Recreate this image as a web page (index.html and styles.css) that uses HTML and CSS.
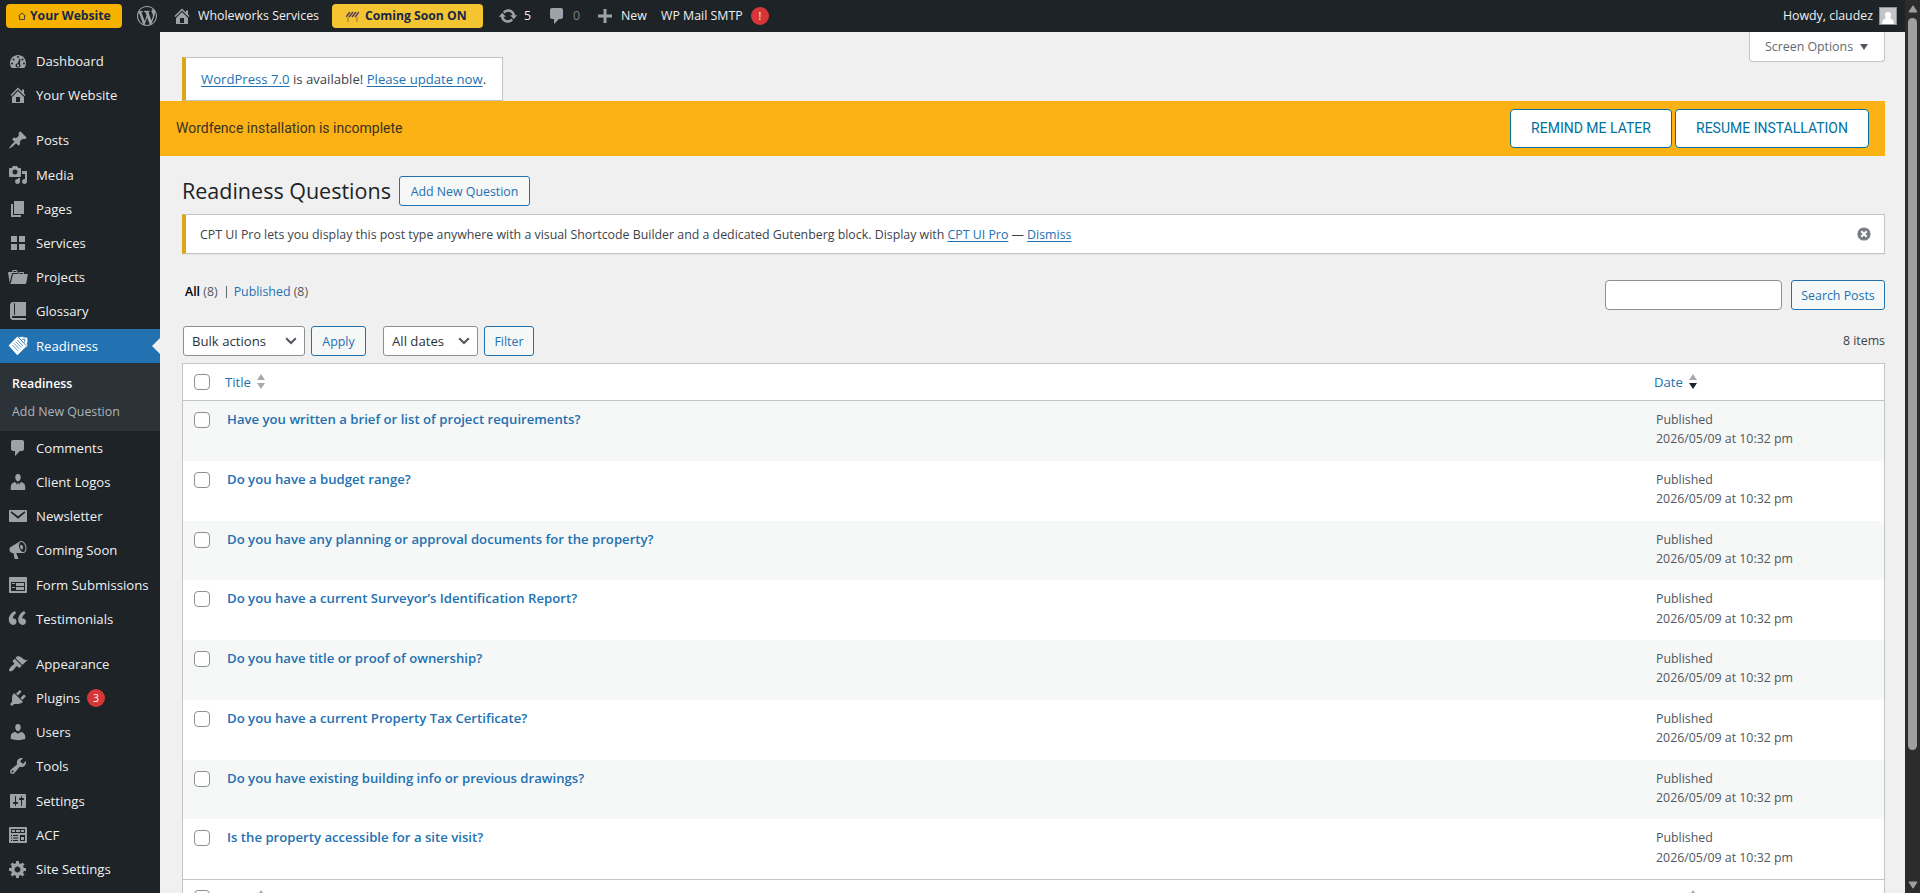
FILE: index.html
```html
<!DOCTYPE html>
<html lang="en">
<head>
    <meta charset="UTF-8">
    <meta name="viewport" content="width=device-width, initial-scale=1.0">
    <title>Readiness Questions</title>
    <link rel="stylesheet" href="styles.css">
</head>
<body>

    <!-- Icon sprite -->
    <svg class="sprite" aria-hidden="true">
        <symbol id="i-wordpress" viewBox="0 0 20 20"><path d="M20 10c0-5.51-4.49-10-10-10C4.48 0 0 4.49 0 10c0 5.52 4.48 10 10 10 5.51 0 10-4.48 10-10zM7.78 15.37L4.37 6.22c.55-.02 1.17-.08 1.17-.08.5-.06.44-1.13-.06-1.11 0 0-1.45.11-2.37.11-.18 0-.37 0-.58-.01C4.12 2.69 6.87 1.11 10 1.11c2.33 0 4.45.87 6.05 2.34-.68-.11-1.65.39-1.65 1.58 0 .74.45 1.36.9 2.1.35.61.55 1.36.55 2.46 0 1.49-1.4 5-1.4 5l-3.03-8.37c.54-.02.82-.17.82-.17.5-.05.44-1.25-.06-1.22 0 0-1.44.12-2.38.12-.87 0-2.33-.12-2.33-.12-.5-.03-.56 1.2-.06 1.22l.92.08 1.26 3.41zM17.41 10c.24-.64.74-1.87.43-4.25.7 1.29 1.05 2.71 1.05 4.25 0 3.29-1.73 6.24-4.4 7.78.97-2.59 1.94-5.2 2.92-7.78zM6.1 18.09C3.12 16.65 1.11 13.53 1.11 10c0-1.3.23-2.48.72-3.59C3.25 10.3 4.67 14.2 6.1 18.09zm4.03-6.63l2.58 6.98c-.86.29-1.76.45-2.71.45-.79 0-1.57-.11-2.29-.33.81-2.38 1.62-4.74 2.42-7.1z"/></symbol>
        <symbol id="i-dashboard" viewBox="0 0 20 20"><path fill-rule="evenodd" d="M3.76 17h12.48C17.34 15.63 18 13.9 18 12c0-4.41-3.58-8-8-8s-8 3.59-8 8c0 1.9.66 3.63 1.76 5zM9 6a1 1 0 1 1 2 0 1 1 0 0 1-2 0zM4.500 8.500a1 1 0 1 1 2 0 1 1 0 0 1-2 0zM13.500 8.500a1 1 0 1 1 2 0 1 1 0 0 1-2 0zM3 12.500a1 1 0 1 1 2 0 1 1 0 0 1-2 0zM15 12.500a1 1 0 1 1 2 0 1 1 0 0 1-2 0zM11.600 7.400l.9.300-.6 5.300c.4.400.6.900.6 1.400 0 1.200-1.100 2.100-2.500 2.100s-2.500-.9-2.500-2.100 1.100-2.200 2.300-2.200zM10 13.200a1.200 1.200 0 1 0 0 2.400 1.200 1.200 0 0 0 0-2.400z"/></symbol>
        <symbol id="i-home" viewBox="0 0 20 20"><path d="M16 8.500l1.530 1.530-1.060 1.060L10 4.600l-6.470 6.490-1.060-1.060L10 2.500l4 4v-2h2v4zm-6-2.460l6 5.990V18H4v-5.970zM12 17v-5H8v5h4z"/></symbol>
        <symbol id="i-pin" viewBox="0 0 20 20"><path d="M10.440 3.020l1.820-1.820 6.360 6.350-1.830 1.820c-1.050-.68-2.480-.57-3.410.36l-.75.75c-.92.93-1.040 2.350-.35 3.410l-1.830 1.820-2.410-2.410-2.800 2.790c-.42.42-3.380 2.710-3.800 2.290s1.860-3.390 2.280-3.810l2.790-2.790L4.100 9.360l1.830-1.820c1.050.69 2.480.57 3.400-.36l.75-.75c.93-.92 1.050-2.350.36-3.410z"/></symbol>
        <symbol id="i-media" viewBox="0 0 20 20"><path d="M13 11V4c0-.55-.45-1-1-1h-1.670L9 1H5L3.670 3H2c-.55 0-1 .45-1 1v7c0 .55.45 1 1 1h10c.55 0 1-.45 1-1zM7 4.500c1.380 0 2.500 1.120 2.500 2.500S8.380 9.500 7 9.500 4.500 8.380 4.500 7 5.620 4.500 7 4.500zM14 6h5v10.500c0 1.380-1.120 2.500-2.500 2.500S14 17.880 14 16.500s1.120-2.500 2.500-2.500c.17 0 .34.02.5.05V9h-3V6zm-4 8.050V13h2v3.500c0 1.380-1.120 2.500-2.500 2.500S7 17.880 7 16.500 8.120 14 9.500 14c.17 0 .34.02.5.05z"/></symbol>
        <symbol id="i-page" viewBox="0 0 20 20"><path d="M6 15V2h10v13H6zm-1 1h8v2H3V5h2v11z"/></symbol>
        <symbol id="i-grid" viewBox="0 0 20 20"><path d="M3 3h6v6H3zM11 3h6v6h-6zM3 11h6v6H3zM11 11h6v6h-6z"/></symbol>
        <symbol id="i-portfolio" viewBox="0 0 20 20"><path d="M4 5H.78c-.37 0-.74.32-.69.84l1.560 9.990S3.500 8.470 3.860 6.700c.11-.53.61-.7.98-.7H10s-.7-2.080-.77-2.310C9.110 3.250 8.890 3 8.450 3H5.140c-.36 0-.7.23-.8.64C4.250 4.040 4 5 4 5zm4.880 0h-4s.42-1 .87-1h2.130c.48 0 1 1 1 1zM2.670 16.250c-.31.47-.76.75-1.260.75h15.730c.54 0 .92-.31 1.030-.83.44-2.190 1.680-8.440 1.680-8.440.07-.5-.3-.73-.62-.73H16V5.530c0-.16-.26-.53-.66-.53h-3.760c-.52 0-.87.58-.87.58L10 7H5.590c-.32 0-.63.19-.69.5 0 0-1.590 6.700-1.720 7.330-.07.37-.22.99-.51 1.420zM15.380 7H11s.58-1 1.130-1h2.290c.71 0 .96 1 .96 1z"/></symbol>
        <symbol id="i-book" viewBox="0 0 20 20"><path d="M5 17h13v2H5c-1.660 0-3-1.340-3-3V4c0-1.660 1.340-3 3-3h13v14H5c-.55 0-1 .45-1 1s.45 1 1 1zm2-3.500v-11c0-.28-.22-.5-.5-.5s-.5.22-.5.5v11c0 .28.22.5.5.5s.5-.22.5-.5z"/></symbol>
        <symbol id="i-readiness" viewBox="0 0 20 20">
            <path d="M10.500.8l1.800.4 1.700-.7 1.500.8 3.800.5.300 3.600-.8 1.800.8 2.300-1.500 1.700z"/>
            <path d="M9.500.6L.6 9.600l8.700 9.600 9-8.800z"/>
            <path d="M10.800 1.800l8.200 8.400M13.800 3.400l3-.4-.1 3.400" fill="none" stroke="#2271b1" stroke-width=".8"/>
            <path d="M9.300 4l5.800 6M7.600 5.600l5.900 6.100M5.900 7.200l6 6.200M4.200 8.900l6 6.200" stroke="#2271b1" stroke-width=".7"/>
        </symbol>
        <symbol id="i-comment" viewBox="0 0 20 20"><path d="M5 2h9c1.100 0 2 .9 2 2v7c0 1.100-.9 2-2 2h-2l-5 5v-5H5c-1.100 0-2-.9-2-2V4c0-1.100.9-2 2-2z"/></symbol>
        <symbol id="i-client" viewBox="0 0 20 20"><path d="M7.300 6l-.030-.190C7.040 4.030 7.840 2 10 2s2.960 2.030 2.730 3.810L12.700 6c-.18 1.500-1.300 3.400-2.700 3.400S7.480 7.500 7.300 6zM2.800 18v-3.500c0-2.300 2-4.300 4.400-4.500L9 12.800l.6-1.300-.4-.8h1.600l-.4.8.6 1.300 1.800-2.800c2.400.2 4.400 2.200 4.400 4.500V18z"/></symbol>
        <symbol id="i-email" viewBox="0 0 20 20"><path fill-rule="evenodd" d="M2 4h16c.55 0 1 .45 1 1v10c0 .55-.45 1-1 1H2c-.55 0-1-.45-1-1V5c0-.55.45-1 1-1zM3.500 5.300L2.600 6.500 10 12.700l7.400-6.200-.9-1.200L10 10.200z"/></symbol>
        <symbol id="i-megaphone" viewBox="0 0 20 20"><path d="M18.150 5.940c.46 1.620.38 3.220-.02 4.480-.42 1.280-1.260 2.180-2.300 2.480-.16.06-.26.06-.4.06-.06.02-.12.02-.18.02-.06.02-.14.02-.22.02h-6.800l2.220 5.500c.02.14-.06.26-.14.34-.08.1-.24.16-.34.16H6.950c-.1 0-.26-.06-.34-.16-.08-.08-.16-.2-.14-.34l-1-5.500H4.250l-.02-.02c-.5.06-1.080-.18-1.540-.62s-.88-1.080-1.060-1.880c-.24-.8-.2-1.560-.02-2.200.18-.62.58-1.080 1.060-1.300l.02-.02 9-5.400c.1-.06.18-.1.24-.16.06-.04.14-.08.24-.12.16-.08.28-.12.5-.18 1.040-.3 2.240.1 3.220.98s1.840 2.240 2.260 3.860zm-2.580 5.980h-.02c.4-.1.74-.34 1.040-.7.58-.7.86-1.760.86-3.040 0-.64-.1-1.300-.28-1.980-.34-1.360-1.020-2.500-1.780-3.240s-1.680-1.100-2.460-.88c-.82.22-1.400.96-1.700 2-.32 1.040-.28 2.360.06 3.720.38 1.360 1 2.500 1.800 3.240.78.74 1.620 1.100 2.480.88zm-2.540-7.080c.22-.04.42-.02.62.04.38.16.76.48 1.020 1s.42 1.200.42 1.780c0 .3-.04.56-.12.8-.18.48-.44.84-.86.94-.34.1-.8-.06-1.140-.4s-.64-.86-.78-1.500c-.18-.62-.12-1.240.02-1.720s.48-.84.82-.94z"/></symbol>
        <symbol id="i-form" viewBox="0 0 20 20"><path d="M2 2h16c.55 0 1 .45 1 1v14c0 .55-.45 1-1 1H2c-.55 0-1-.45-1-1V3c0-.55.45-1 1-1zm15 14V7H3v9h14zM4 8v1h3V8H4zm4 0v3h8V8H8zm-4 4v1h3v-1H4zm4 0v3h8v-3H8z"/></symbol>
        <symbol id="i-quote" viewBox="0 0 20 20"><path d="M8.540 12.740c0-.87-.24-1.610-.72-2.220-.73-.92-2.140-1.030-2.960-.85-.34-1.930 1.300-4.390 3.420-5.450L6.650 1.940C3.450 3.460.31 6.960.85 11.370 1.190 14.160 2.800 16 5.080 16c1 0 1.830-.29 2.480-.88.66-.59.98-1.380.98-2.380zm9.430 0c0-.87-.24-1.610-.72-2.220-.73-.92-2.140-1.030-2.960-.85-.34-1.930 1.300-4.390 3.420-5.450l-1.630-2.280c-3.200 1.520-6.340 5.020-5.800 9.430.34 2.790 1.950 4.630 4.230 4.630 1 0 1.830-.29 2.480-.88.66-.59.98-1.380.98-2.380z"/></symbol>
        <symbol id="i-brush" viewBox="0 0 20 20"><path d="M14.480 11.060L7.410 3.990l1.500-1.500c.5-.56 2.300-.47 3.510.32 1.210.8 1.430 1.280 2.910 2.100 1.180.64 2.450 1.260 4.450.85zm-.71.71L6.700 4.700 4.930 6.470c-.39.39-.39 1.020 0 1.410l1.060 1.060c.39.39.39 1.030 0 1.420-.6.6-1.430 1.110-2.210 1.690-.35.26-.7.53-1.010.84C1.430 14.230.4 16.080 1.400 17.070c.99 1 2.840-.03 4.180-1.360.31-.31.58-.66.85-1.020.57-.78 1.080-1.610 1.690-2.210.39-.39 1.020-.39 1.410 0l1.060 1.060c.39.39 1.020.39 1.410 0z"/></symbol>
        <symbol id="i-plug" viewBox="0 0 20 20"><path d="M13.110 4.360L9.870 7.600 8 5.730l3.240-3.240c.35-.34 1.050-.2 1.560.32.52.51.66 1.210.31 1.550zm-8 1.770l.91-1.120 9.010 9.010-1.190.84c-.71.71-2.630 1.160-3.820 1.160H6.140L4.900 17.260c-.59.59-1.540.59-2.120 0-.59-.58-.59-1.530 0-2.120l1.240-1.240v-3.880c0-1.130.4-3.190 1.090-3.890zm7.260 3.970l3.240-3.240c.34-.35 1.040-.21 1.550.31.52.51.66 1.210.31 1.550l-3.240 3.250z"/></symbol>
        <symbol id="i-user" viewBox="0 0 20 20"><path d="M10 9.250c-2.270 0-2.730-3.440-2.730-3.440C7 4.020 7.820 2 9.970 2c2.160 0 2.980 2.020 2.710 3.810 0 0-.41 3.440-2.680 3.440zm0 2.570L12.720 10c2.390 0 4.520 2.330 4.520 4.530v2.490s-3.650 1.130-7.240 1.130c-3.650 0-7.240-1.130-7.240-1.130v-2.490c0-2.250 1.940-4.480 4.470-4.480z"/></symbol>
        <symbol id="i-wrench" viewBox="0 0 20 20"><path d="M16.680 9.770c-1.340 1.340-3.300 1.670-4.950.99l-5.410 6.520c-.99.99-2.590.99-3.580 0s-.99-2.590 0-3.570l6.520-5.420c-.68-1.650-.35-3.610.99-4.950 1.280-1.280 3.120-1.620 4.720-1.060l-2.890 2.890 2.820 2.820 2.860-2.870c.53 1.580.18 3.390-1.080 4.650zM3.810 16.210c.4.39 1.040.39 1.430 0 .4-.4.4-1.040 0-1.430-.39-.4-1.030-.4-1.430 0-.39.39-.39 1.030 0 1.430z"/></symbol>
        <symbol id="i-sliders" viewBox="0 0 20 20"><path d="M18 16V4c0-.55-.45-1-1-1H3c-.55 0-1 .45-1 1v12c0 .55.45 1 1 1h14c.55 0 1-.45 1-1zM8 11h1c.55 0 1 .45 1 1s-.45 1-1 1H8v1.500c0 .28-.22.5-.5.5s-.5-.22-.5-.5V13H6c-.55 0-1-.45-1-1s.45-1 1-1h1V5.500c0-.28.22-.5.5-.5s.5.22.5.5V11zm5-2h-1c-.55 0-1-.45-1-1s.45-1 1-1h1V5.500c0-.28.22-.5.5-.5s.5.22.5.5V7h1c.55 0 1 .45 1 1s-.45 1-1 1h-1v5.500c0 .28-.22.5-.5.5s-.5-.22-.5-.5V9z"/></symbol>
        <symbol id="i-acf" viewBox="0 0 20 20"><path fill-rule="evenodd" d="M2 2h16c.55 0 1 .45 1 1v14c0 .55-.45 1-1 1H2c-.55 0-1-.45-1-1V3c0-.55.45-1 1-1zM3 4v4h14V4zM4 5v2h3V5zM8 5v2h4V5zM13 5v2h3V5zM3 10v1h1v-1zM5 10v1h5v-1zM3 12.500v1h1v-1zM5 12.500v1h5v-1zM3 15v1h1v-1zM5 15v1h5v-1zM12 10v6h5v-6zM13 12h3v3h-3z"/></symbol>
        <symbol id="i-gear" viewBox="0 0 20 20"><path d="M18 12h-2.180c-.17.7-.44 1.350-.81 1.930l1.540 1.540-2.100 2.100-1.540-1.540c-.58.36-1.230.63-1.910.79V19H8v-2.180c-.68-.16-1.330-.43-1.910-.79l-1.540 1.540-2.120-2.120 1.540-1.540c-.36-.58-.63-1.230-.79-1.910H1V9.030h2.170c.16-.7.44-1.350.8-1.940L2.430 5.550l2.100-2.100 1.540 1.540c.58-.37 1.240-.64 1.930-.81V2h3v2.180c.68.16 1.330.43 1.910.79l1.540-1.540 2.120 2.120-1.540 1.540c.36.59.64 1.240.8 1.940H18V12zm-8.500 1.500c1.660 0 3-1.340 3-3s-1.340-3-3-3-3 1.340-3 3 1.340 3 3 3z"/></symbol>
        <symbol id="i-update" viewBox="0 0 20 20"><path d="M10.200 3.280c3.530 0 6.430 2.610 6.920 6h2.080l-3.500 4-3.500-4h2.320c-.45-1.970-2.210-3.450-4.320-3.450-1.450 0-2.730.71-3.540 1.780L4.950 5.660C6.230 4.200 8.110 3.280 10.200 3.280zm-.4 13.440c-3.520 0-6.430-2.610-6.920-6H.8l3.500-4c1.170 1.330 2.330 2.670 3.500 4H5.480c.45 1.970 2.210 3.450 4.320 3.450 1.450 0 2.730-.71 3.540-1.780l1.710 1.950c-1.280 1.460-3.150 2.380-5.250 2.380z"/></symbol>
        <symbol id="i-plus" viewBox="0 0 20 20"><path d="M8.500 3h3v5.500H17v3h-5.500V17h-3v-5.500H3v-3h5.500z"/></symbol>
        <symbol id="i-sort" viewBox="0 0 8 15"><path d="M4 0l4 6H0z"/><path class="down" d="M0 9h8l-4 6z"/></symbol>
        <symbol id="i-chevron" viewBox="0 0 12 8"><path d="M1.200 1.200L6 6l4.800-4.800" fill="none" stroke="#50575e" stroke-width="2"/></symbol>
    </svg>

    <header class="adminbar">
        <a class="pill pill-site"><svg class="house" viewBox="0 0 8 8"><path d="M.5 4L4 1l3.500 3M1.500 3.500v4h5v-4" fill="none" stroke="#14284a" stroke-width=".8"/></svg>Your Website</a>
        <svg class="icon bar-wp"><use href="#i-wordpress"/></svg>
        <svg class="icon bar-home"><use href="#i-home"/></svg>
        <span class="bar-name">Wholeworks Services</span>
        <a class="pill pill-soon"><svg class="barrier" viewBox="0 0 13 11"><path d="M2 5v6M11 5v6" stroke="#a9803a" stroke-width="1.200"/><path d="M0 1h13v5H0z" fill="#e3b95e"/><path d="M0 6l4-5M3 6l4-5M6 6l4-5M9 6l4-5" stroke="#5a3b40" stroke-width="1.300"/></svg>Coming Soon ON</a>
        <svg class="icon bar-update"><use href="#i-update"/></svg>
        <span class="bar-count">5</span>
        <svg class="icon bar-comment"><use href="#i-comment"/></svg>
        <span class="bar-zero">0</span>
        <svg class="icon bar-plus"><use href="#i-plus"/></svg>
        <span class="bar-new">New</span>
        <span class="bar-smtp">WP Mail SMTP</span>
        <span class="badge bar-alert">!</span>
        <span class="bar-howdy">Howdy, claudez</span>
        <svg class="avatar" viewBox="0 0 18 18"><path d="M0 0h18v18H0z" fill="#8c8f94"/><path d="M1 1h16v16H1z" fill="#c3c4c7"/><path d="M9 5c1.900 0 3 1.300 3 3.100 0 1.100-.4 2.200-1.100 2.900 2.400.5 3.900 2.700 4 6H3.100c.1-3.300 1.600-5.500 4-6C6.400 10.300 6 9.200 6 8.100 6 6.300 7.100 5 9 5z" fill="#fff"/></svg>
    </header>

    <div class="layout">
        <nav class="menu">
            <a class="item"><svg class="icon"><use href="#i-dashboard"/></svg>Dashboard</a>
            <a class="item"><svg class="icon"><use href="#i-home"/></svg>Your Website</a>
            <div class="separator"></div>
            <a class="item"><svg class="icon"><use href="#i-pin"/></svg>Posts</a>
            <a class="item"><svg class="icon"><use href="#i-media"/></svg>Media</a>
            <a class="item"><svg class="icon"><use href="#i-page"/></svg>Pages</a>
            <a class="item"><svg class="icon"><use href="#i-grid"/></svg>Services</a>
            <a class="item"><svg class="icon"><use href="#i-portfolio"/></svg>Projects</a>
            <a class="item"><svg class="icon"><use href="#i-book"/></svg>Glossary</a>
            <a class="item current"><svg class="icon"><use href="#i-readiness"/></svg>Readiness</a>
            <div class="submenu">
                <a class="active">Readiness</a>
                <a>Add New Question</a>
            </div>
            <a class="item"><svg class="icon"><use href="#i-comment"/></svg>Comments</a>
            <a class="item"><svg class="icon"><use href="#i-client"/></svg>Client Logos</a>
            <a class="item"><svg class="icon"><use href="#i-email"/></svg>Newsletter</a>
            <a class="item"><svg class="icon"><use href="#i-megaphone"/></svg>Coming Soon</a>
            <a class="item"><svg class="icon"><use href="#i-form"/></svg>Form Submissions</a>
            <a class="item"><svg class="icon"><use href="#i-quote"/></svg>Testimonials</a>
            <div class="separator"></div>
            <a class="item"><svg class="icon"><use href="#i-brush"/></svg>Appearance</a>
            <a class="item"><svg class="icon"><use href="#i-plug"/></svg>Plugins <span class="badge">3</span></a>
            <a class="item"><svg class="icon"><use href="#i-user"/></svg>Users</a>
            <a class="item"><svg class="icon"><use href="#i-wrench"/></svg>Tools</a>
            <a class="item"><svg class="icon"><use href="#i-sliders"/></svg>Settings</a>
            <a class="item"><svg class="icon"><use href="#i-acf"/></svg>ACF</a>
            <a class="item"><svg class="icon"><use href="#i-gear"/></svg>Site Settings</a>
        </nav>

        <main class="content">
            <a class="screen-options">Screen Options <span class="arrow"></span></a>

            <div class="notice update-nag"><p><a>WordPress 7.0</a> is available! <a>Please update now</a>.</p></div>

            <div class="wordfence">
                <span class="wordfence-text">Wordfence installation is incomplete</span>
                <div class="wordfence-actions">
                    <a class="wf-btn wf-remind">Remind me later</a>
                    <a class="wf-btn wf-resume">Resume installation</a>
                </div>
            </div>

            <div class="heading">
                <h1>Readiness Questions</h1>
                <a class="button add-new">Add New Question</a>
            </div>

            <div class="notice cpt-notice">
                <p>CPT UI Pro lets you display this post type anywhere with a visual Shortcode Builder and a dedicated Gutenberg block. Display with <a>CPT UI Pro</a> — <a>Dismiss</a></p>
                <svg class="dismiss" viewBox="0 0 14 14"><circle cx="7" cy="7" r="6.600" fill="#787c82"/><path d="M4.300 4.300l5.400 5.400M9.700 4.300L4.300 9.700" stroke="#fff" stroke-width="2"/></svg>
            </div>

            <div class="filters">
                <div class="views"><b>All</b> <span class="count">(8)</span><i></i><a>Published</a> <span class="count">(8)</span></div>
                <div class="search">
                    <input type="text" class="search-input">
                    <a class="button search-btn">Search Posts</a>
                </div>
            </div>

            <div class="tablenav">
                <div class="select bulk">Bulk actions<svg class="chevron"><use href="#i-chevron"/></svg></div>
                <a class="button apply">Apply</a>
                <div class="select dates">All dates<svg class="chevron"><use href="#i-chevron"/></svg></div>
                <a class="button filter">Filter</a>
                <span class="total">8 items</span>
            </div>

            <div class="list">
                <div class="list-head">
                    <span class="check"></span>
                    <a class="col-title">Title <svg class="sort"><use href="#i-sort"/></svg></a>
                    <a class="col-date">Date <svg class="sort desc"><use href="#i-sort"/></svg></a>
                </div>
                <div class="row"><span class="check"></span><a class="row-title">Have you written a brief or list of project requirements?</a><div class="date">Published<br>2026/05/09 at 10:32 pm</div></div>
                <div class="row"><span class="check"></span><a class="row-title">Do you have a budget range?</a><div class="date">Published<br>2026/05/09 at 10:32 pm</div></div>
                <div class="row"><span class="check"></span><a class="row-title">Do you have any planning or approval documents for the property?</a><div class="date">Published<br>2026/05/09 at 10:32 pm</div></div>
                <div class="row"><span class="check"></span><a class="row-title">Do you have a current Surveyor’s Identification Report?</a><div class="date">Published<br>2026/05/09 at 10:32 pm</div></div>
                <div class="row"><span class="check"></span><a class="row-title">Do you have title or proof of ownership?</a><div class="date">Published<br>2026/05/09 at 10:32 pm</div></div>
                <div class="row"><span class="check"></span><a class="row-title">Do you have a current Property Tax Certificate?</a><div class="date">Published<br>2026/05/09 at 10:32 pm</div></div>
                <div class="row"><span class="check"></span><a class="row-title">Do you have existing building info or previous drawings?</a><div class="date">Published<br>2026/05/09 at 10:32 pm</div></div>
                <div class="row"><span class="check"></span><a class="row-title">Is the property accessible for a site visit?</a><div class="date">Published<br>2026/05/09 at 10:32 pm</div></div>
                <div class="list-head list-foot">
                    <span class="check"></span>
                    <a class="col-title">Title <svg class="sort"><use href="#i-sort"/></svg></a>
                    <a class="col-date">Date <svg class="sort desc"><use href="#i-sort"/></svg></a>
                </div>
            </div>
        </main>
    </div>

    <!-- Dark page scrollbar -->
    <div class="scrollbar">
        <svg viewBox="0 0 10 8"><path d="M5 .8L9 7H1z" stroke="#9f9f9f" stroke-linejoin="round"/></svg>
        <div class="thumb"></div>
        <svg viewBox="0 0 10 8"><path d="M1 1h8L5 7.200z" stroke="#9f9f9f" stroke-linejoin="round"/></svg>
    </div>

</body>
</html>
```

FILE: styles.css
```css
* {
    box-sizing: border-box;
}
body {
    margin: 0;
    height: 893px;
    overflow: hidden;
    background: #f0f0f1;
    color: #3c434a;
    font-family: "Open Sans", "Noto Sans", sans-serif;
    font-size: 12.37px;
    line-height: 18px;
}
a {
    color: #2271b1;
}
.sprite {
    display: none;
}
.icon {
    width: 20px;
    height: 20px;
    flex: none;
    fill: #9ca2a7;
}
.badge {
    display: inline-flex;
    flex: none;
    align-items: center;
    justify-content: center;
    width: 18px;
    height: 18px;
    border-radius: 9px;
    background: #d63638;
    color: #fff;
    font-size: 10.5px;
}

/* Admin bar */
.adminbar {
    display: flex;
    align-items: center;
    height: 32px;
    width: 1905px;
    padding: 0 8px 0 6px;
    background: #1d2327;
    color: #f0f0f1;
    white-space: nowrap;
}
.pill {
    display: flex;
    align-items: center;
    height: 24px;
    border-radius: 4px;
    color: #14284a;
    font-weight: 700;
    font-size: 12.2px;
}
.pill-site {
    width: 116px;
    padding-left: 12px;
    background: #f7b200;
}
.pill-soon {
    width: 151px;
    padding-left: 14px;
    background: #f5c431;
}
.house {
    width: 8px;
    height: 8px;
    margin-right: 4px;
}
.barrier {
    width: 13px;
    height: 11px;
    margin-right: 6px;
}
.bar-wp {
    margin-left: 15px;
}
.bar-home {
    margin-left: 15px;
}
.bar-name {
    width: 140px;
    padding-left: 6px;
}
.bar-update {
    margin-left: 15px;
}
.bar-count {
    width: 22px;
    padding-left: 6px;
}
.bar-comment {
    margin-left: 7px;
}
.bar-zero {
    width: 28px;
    padding-left: 6px;
    color: #7d8388;
}
.bar-new {
    width: 46px;
    padding-left: 6px;
}
.bar-smtp {
    width: 90px;
}
.bar-howdy {
    margin-left: auto;
}
.avatar {
    width: 18px;
    height: 18px;
    margin-left: 6px;
}

/* Side menu */
.layout {
    display: flex;
    width: 1905px;
    height: 861px;
    overflow: hidden;
}
.menu {
    width: 160px;
    flex: none;
    padding-top: 12px;
    background: #1d2327;
}
.item {
    display: flex;
    align-items: center;
    position: relative;
    height: 34.2px;
    padding-left: 8px;
    color: #f0f0f1;
    font-size: 13.15px;
    white-space: nowrap;
}
.item .icon {
    margin-right: 8px;
}
.item .badge {
    margin-left: 7px;
}
.separator {
    height: 11px;
}
.current {
    background: #2271b1;
    color: #fff;
}
.current .icon {
    fill: #fff;
}
.current::after {
    content: "";
    position: absolute;
    right: 0;
    border: 8px solid transparent;
    border-right-color: #f0f0f1;
}
.submenu {
    height: 68px;
    padding: 7px 0 0 12px;
    background: #2c3338;
}
.submenu a {
    display: block;
    height: 28px;
    line-height: 27px;
    color: #b1b4b7;
}
.submenu .active {
    color: #fff;
    font-weight: 600;
}

/* Page content */
.content {
    flex: 1;
    position: relative;
    padding: 25px 20px 0 22px;
}
.screen-options {
    position: absolute;
    top: 0;
    right: 20px;
    width: 136px;
    height: 30px;
    padding-left: 15px;
    border: 1px solid #c3c4c7;
    border-top: none;
    border-radius: 0 0 4px 4px;
    background: #fff;
    color: #646970;
    line-height: 29px;
}
.arrow {
    display: inline-block;
    margin-left: 4px;
    border: 4px solid transparent;
    border-top: 6px solid #50575e;
    border-bottom: none;
    vertical-align: 1px;
}
.notice {
    border: 1px solid #c3c4c7;
    border-left: 4px solid #dba617;
    background: #fff;
}
.notice p {
    margin: 0;
    white-space: nowrap;
}
.notice a {
    text-decoration: underline;
    text-underline-offset: 2px;
}
.update-nag {
    width: 321px;
    height: 44px;
    padding: 12px 15px;
    font-size: 13.15px;
}
.wordfence {
    display: flex;
    justify-content: space-between;
    align-items: center;
    height: 55px;
    margin-left: -22px;
    padding: 0 16px;
    background: #fcb214;
    color: #3a3223;
    font-family: Roboto, sans-serif;
    font-size: 14px;
}
.wordfence-text {
    padding-bottom: 2px;
}
.wordfence-actions {
    display: flex;
    gap: 3px;
}
.wf-btn {
    height: 39px;
    border: 1px solid #00709e;
    border-radius: 4px;
    background: #fff;
    color: #00709e;
    line-height: 37px;
    text-align: center;
    text-transform: uppercase;
}
.wf-remind {
    width: 162px;
}
.wf-resume {
    width: 194px;
}
.heading {
    display: flex;
    align-items: center;
    height: 58px;
    padding-top: 12px;
}
h1 {
    width: 217px;
    margin: 0;
    color: #1d2327;
    font-size: 21.5px;
    font-weight: 400;
    line-height: 30px;
    white-space: nowrap;
}
.button {
    height: 30px;
    border: 1px solid #2271b1;
    border-radius: 3px;
    background: #f6f7f7;
    line-height: 29px;
    text-align: center;
    white-space: nowrap;
}
.add-new {
    width: 131px;
}
.cpt-notice {
    display: flex;
    align-items: center;
    justify-content: space-between;
    height: 40px;
    padding: 0 13px 0 14px;
    box-shadow: 0 1px 1px rgba(0, 0, 0, 0.04);
}
.cpt-notice p {
    padding-top: 1px;
}
.dismiss {
    width: 14px;
    height: 14px;
}
.filters {
    display: flex;
    justify-content: space-between;
    padding: 26px 0 0 3px;
}
.views {
    padding-top: 3px;
}
.views b {
    color: #000;
    font-weight: 600;
}
.views i {
    display: inline-block;
    width: 1px;
    height: 12px;
    margin: 0 7px 0 8px;
    background: #646970;
    vertical-align: -2px;
}
.count {
    color: #50575e;
}
.search {
    display: flex;
    gap: 9px;
}
.search-input {
    width: 177px;
    height: 30px;
    border: 1px solid #8c8f94;
    border-radius: 4px;
    background: #fff;
}
.search-btn {
    width: 94px;
}
.tablenav {
    display: flex;
    height: 53px;
    padding: 16px 0 0 1px;
}
.select {
    display: flex;
    align-items: center;
    justify-content: space-between;
    height: 30px;
    padding: 0 7px 0 8px;
    border: 1px solid #8c8f94;
    border-radius: 3px;
    background: #fff;
    color: #2c3338;
    font-size: 13.15px;
}
.chevron {
    width: 12px;
    height: 8px;
}
.bulk {
    width: 122px;
}
.apply {
    width: 55px;
    margin: 0 17px 0 6px;
}
.dates {
    width: 95px;
}
.filter {
    width: 50px;
    margin-left: 6px;
}
.total {
    margin-left: auto;
    padding-top: 6px;
}

/* Posts list */
.list {
    border: 1px solid #c3c4c7;
    background: #fff;
}
.list-head {
    display: grid;
    grid-template-columns: 42px 1fr 230px;
    height: 37px;
    border-bottom: 1px solid #c3c4c7;
    font-size: 13.15px;
    line-height: 36px;
}
.check {
    width: 16px;
    height: 16px;
    margin: 10px 0 0 11px;
    border: 1px solid #8c8f94;
    border-radius: 4px;
    background: #fff;
}
.sort {
    width: 8px;
    height: 15px;
    margin-left: 3px;
    fill: #a7aaad;
    vertical-align: -2px;
}
.down {
    fill: var(--sort-down, #a7aaad);
}
.desc {
    --sort-down: #1d2327;
}
.row {
    display: grid;
    grid-template-columns: 44px 1fr 228px;
    height: 59.75px;
    padding-top: 9px;
}
.row:nth-child(even) {
    background: #f6f7f7;
}
.row .check {
    margin-top: 2px;
}
.row-title {
    font-size: 13.17px;
    font-weight: 600;
}
.date {
    color: #50575e;
    line-height: 19.3px;
}
.list-foot {
    border-top: 1px solid #c3c4c7;
    border-bottom: none;
}

/* Scrollbar */
.scrollbar {
    position: fixed;
    top: 0;
    right: 0;
    display: flex;
    flex-direction: column;
    justify-content: space-between;
    align-items: center;
    width: 15px;
    height: 893px;
    padding: 5px 0 4px;
    background: #2c2c2c;
}
.scrollbar svg {
    width: 10px;
    height: 8px;
    fill: #9f9f9f;
}
.thumb {
    width: 9px;
    height: 732px;
    margin: 5px 0 auto;
    border-radius: 5px;
    background: #9f9f9f;
}
```
